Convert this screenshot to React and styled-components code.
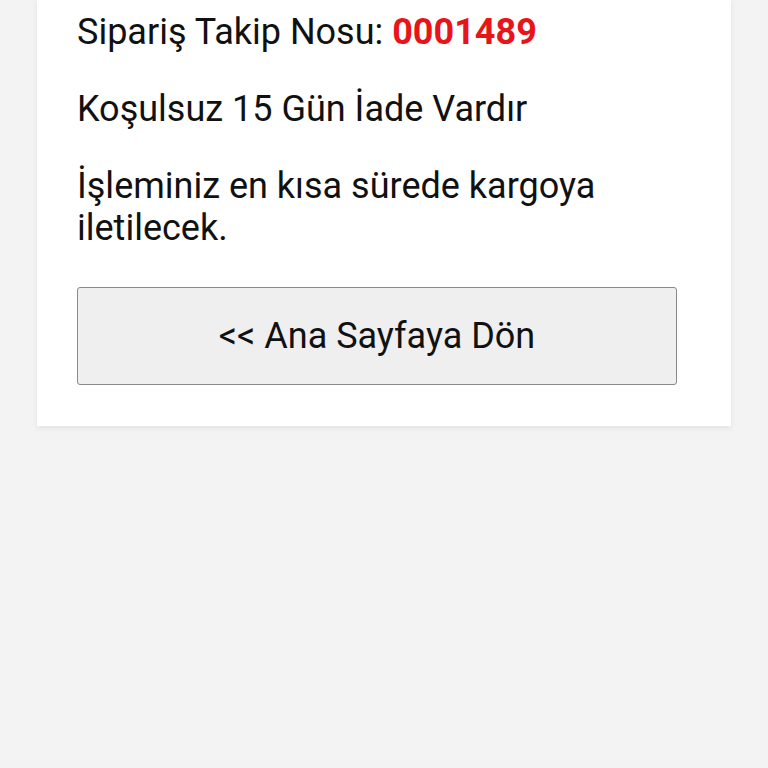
import styled, { createGlobalStyle } from 'styled-components';

const GlobalStyle = createGlobalStyle`
  html, body {
    margin: 0;
    padding: 0;
    background: #f3f3f3;
    font-family: Roboto, "Noto Sans", "Liberation Sans", sans-serif;
  }
`;

const Page = styled.div`
  width: 768px;
  height: 768px;
  background: #f3f3f3;
  padding: 0 37px;
  box-sizing: border-box;
`;

const Card = styled.div`
  background: #ffffff;
  box-shadow: 0 2px 6px rgba(0, 0, 0, 0.07);
  padding: 11px 40px 41px 40px;
`;

const Line = styled.p`
  margin: 0 0 ${(p) => p.gap || 35}px 0;
  font-size: 36px;
  line-height: 42px;
  color: #111;
`;

const Code = styled.span`
  color: #e8141a;
  font-weight: 700;
`;

const BackButton = styled.button`
  display: block;
  width: 600px;
  height: 98px;
  background: #efefef;
  border: 1px solid #8a8a8a;
  border-radius: 3px;
  font-family: Roboto, "Noto Sans", "Liberation Sans", sans-serif;
  font-size: 36px;
  color: #111;
  padding: 0;
`;

const App = () => {
  return (
    <>
      <GlobalStyle />
      <Page>
        <Card>
          <Line>Sipariş Takip Nosu: <Code>0001489</Code></Line>
          <Line>Koşulsuz 15 Gün İade Vardır</Line>
          <Line gap={38}>İşleminiz en kısa sürede kargoya iletilecek.</Line>
          <BackButton>&lt;&lt; Ana Sayfaya Dön</BackButton>
        </Card>
      </Page>
    </>
  );
};

export default App;
